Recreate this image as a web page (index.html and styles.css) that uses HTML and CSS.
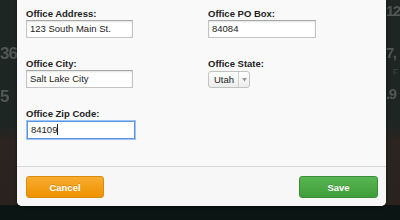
FILE: index.html
```html
<!DOCTYPE html>
<html lang="en">
<head>
    <meta charset="UTF-8">
    <meta name="viewport" content="width=device-width, initial-scale=1.0">
    <title>Edit Office</title>
    <link rel="stylesheet" href="styles.css">
</head>
<body>
    <div class="backdrop">
        <div class="stats left">
            <span class="big">36</span>
            <span class="big">5</span>
        </div>
        <div class="stats right">
            <span class="big">12</span>
            <span class="big">7,</span>
            <span class="small">F</span>
            <span class="big">.9</span>
        </div>
    </div>

    <div class="modal">
        <div class="modal-body">
            <div class="field">
                <label>Office Address:</label>
                <div class="input">123 South Main St.</div>
            </div>
            <div class="field">
                <label>Office PO Box:</label>
                <div class="input">84084</div>
            </div>

            <div class="field">
                <label>Office City:</label>
                <div class="input">Salt Lake City</div>
            </div>
            <div class="field">
                <label>Office State:</label>
                <div class="select">
                    <span class="select-text">Utah</span>
                    <span class="select-arrow">
                        <svg width="5" height="4" viewBox="0 0 5 4"><path d="M0 0 L5 0 L2.5 3.5 Z" fill="#999"/></svg>
                    </span>
                </div>
            </div>

            <div class="field">
                <label>Office Zip Code:</label>
                <div class="input focused">84109<span class="caret"></span></div>
            </div>
        </div>
        <div class="modal-footer">
            <button class="btn cancel">Cancel</button>
            <button class="btn save">Save</button>
        </div>
    </div>
</body>
</html>
```

FILE: styles.css
```css
body {
    margin: 0;
    width: 400px;
    height: 220px;
    overflow: hidden;
    position: relative;
    font-family: 'Liberation Sans', Arial, sans-serif;
    background: #0b1614;
}

.backdrop {
    height: 205px;
    display: flex;
    justify-content: space-between;
    background: linear-gradient(to bottom, #1e2624 0, #1e2624 125px, #2b2420 140px, #2a221d 205px);
}

.stats {
    display: flex;
    flex-direction: column;
    color: #515755;
    font-weight: bold;
    filter: blur(0.4px);
}

.stats.left {
    padding-top: 43px;
    letter-spacing: -1px;
}

.stats.right {
    align-items: flex-start;
    width: 14px;
    letter-spacing: -1.5px;
}

.big {
    font-size: 17px;
    line-height: 22px;
    margin-bottom: 21px;
}

.stats.right .big {
    font-size: 15px;
}

.stats.right .big:first-child {
    margin-bottom: 20px;
}

.small {
    font-size: 9px;
    font-weight: normal;
    color: #3f4846;
    margin: -18px 0 6px 7px;
}

.modal {
    position: absolute;
    left: 17px;
    top: 0;
    width: 369px;
    height: 206px;
    background: #f9f9f9;
    border-radius: 0 0 5px 5px;
    box-shadow: 0 1px 3px rgba(0, 0, 0, 0.5);
    overflow: hidden;
}

.modal-body {
    height: 159px;
    padding: 7px 0 0 9px;
    display: grid;
    grid-template-columns: 182px 1fr;
    grid-auto-rows: 50px;
    align-content: start;
    border-bottom: 1px solid #d8d8d8;
    box-shadow: 0 1px 2px rgba(0, 0, 0, 0.08);
}

.field label {
    display: block;
    font-size: 9.5px;
    font-weight: bold;
    color: #222;
    line-height: 13px;
}

.input {
    width: 99px;
    height: 16px;
    padding: 0 3px;
    font-size: 9.5px;
    line-height: 16px;
    color: #222;
    background: #fff;
    border: 1px solid #c4c4c4;
    border-top-color: #a8a8a8;
    box-shadow: inset 0 1px 2px rgba(0, 0, 0, 0.12);
}

.field:nth-child(even) .input {
    width: 100px;
}

.input.focused {
    width: 100px;
    height: 16px;
    border: 1px solid #5a96e6;
    box-shadow: 0 0 0 1px #9ec2f2;
    margin-top: 1px;
    margin-left: 1px;
}

.caret {
    display: inline-block;
    width: 1px;
    height: 11px;
    background: #222;
    vertical-align: -2px;
}

.select {
    width: 40px;
    height: 15px;
    display: flex;
    margin-top: 1px;
    border: 1px solid #c2c2c2;
    border-radius: 3px;
    background: linear-gradient(to bottom, #ffffff, #ececec);
    font-size: 9.5px;
    color: #222;
}

.select-text {
    flex: 1;
    padding-left: 5px;
    line-height: 15px;
}

.select-arrow {
    width: 10px;
    border-left: 1px solid #d0d0d0;
    display: flex;
    align-items: center;
    justify-content: center;
}

.modal-footer {
    display: flex;
    justify-content: space-between;
    padding: 9px 8px 0 9px;
    background: #f7f7f7;
    height: 37px;
}

.btn {
    height: 22px;
    border-radius: 3px;
    font-family: 'Liberation Sans', Arial, sans-serif;
    font-size: 9.5px;
    font-weight: bold;
    color: #fff;
    cursor: pointer;
    text-shadow: 0 -1px 0 rgba(0, 0, 0, 0.15);
}

.cancel {
    width: 78px;
    background: linear-gradient(to bottom, #f9ac2f, #ee9200);
    border: 1px solid #d98b10;
}

.save {
    width: 79px;
    background: linear-gradient(to bottom, #58b752, #3f9d3b);
    border: 1px solid #3a8f36;
}
```
